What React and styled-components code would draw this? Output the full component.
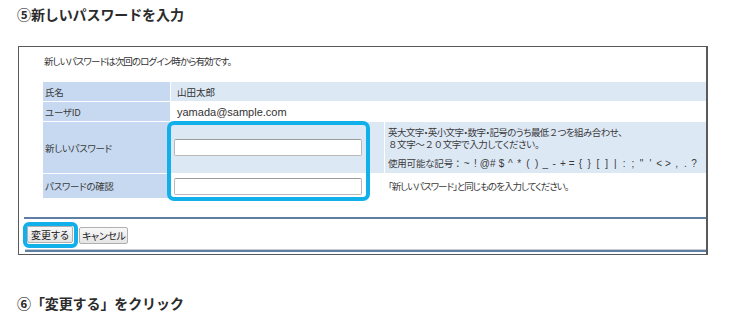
import React from "react";
import styled, { createGlobalStyle } from "styled-components";

const Global = createGlobalStyle`
  html, body { margin: 0; padding: 0; background: #fff; }
  body { font-family: "Liberation Sans", "Noto Sans CJK JP", sans-serif; color: #333; }
`;

const Page = styled.div`
  width: 732px;
  height: 335px;
  overflow: hidden;
  padding-left: 17px;
  box-sizing: border-box;
`;

const StepTitle = styled.h2`
  margin: 0;
  margin-top: ${(p) => p.$top}px;
  height: 28px;
  line-height: 28px;
  font-family: "Noto Sans CJK JP", sans-serif;
  font-size: 14px;
  font-weight: 700;
  color: #2b2b2b;
  letter-spacing: -0.1px;
`;

const Frame = styled.div`
  margin-top: 18px;
  margin-left: 1px;
  width: 690px;
  height: 209px;
  box-sizing: border-box;
  border: 1px solid #5a5a5a;
  border-right-width: 2px;
  display: flex;
  flex-direction: column;
  padding-top: 6px;
  overflow: hidden;
`;

const Intro = styled.p`
  margin: 0 0 0 25px;
  height: 16px;
  line-height: 16px;
  font-family: "Noto Sans CJK JP", sans-serif;
  font-feature-settings: "palt";
  font-size: 9.5px;
  letter-spacing: -0.9px;
  color: #333;
`;

const FormGrid = styled.div`
  position: relative;
  margin-top: 13px;
  margin-left: 24px;
  display: grid;
  grid-template-columns: 127px 213px minmax(0, 1fr);
  grid-template-rows: 19px 19px 51px 24px;
  gap: 1px;
`;

const Label = styled.div`
  background: #c6d9f0;
  display: flex;
  align-items: center;
  padding-left: 2px;
  font-family: "Noto Sans CJK JP", sans-serif;
  font-feature-settings: "palt";
  font-size: 9.5px;
  letter-spacing: -0.3px;
  color: #3a3a3a;
`;

const Value = styled.div`
  grid-column: ${(p) => (p.$wide ? "2 / 4" : "auto")};
  background: ${(p) => (p.$shaded ? "#dde8f5" : "#fff")};
  display: flex;
  align-items: center;
  padding-left: ${(p) => (p.$wide ? 6 : 3)}px;
  font-family: ${(p) => (p.$latin ? '"Liberation Sans", sans-serif' : '"Noto Sans CJK JP", sans-serif')};
  font-size: ${(p) => (p.$latin ? 11 : 9.5)}px;
  color: #333;
`;

const Note = styled.div`
  background: ${(p) => (p.$shaded ? "#dde8f5" : "#fff")};
  display: flex;
  flex-direction: column;
  justify-content: center;
  padding-left: 3px;
  font-family: "Noto Sans CJK JP", sans-serif;
  font-feature-settings: "palt";
  font-size: 9.5px;
  color: #3a3a3a;
  white-space: nowrap;
  overflow: hidden;
`;

const NoteLine = styled.div`
  line-height: 12px;
  margin-top: ${(p) => p.$gap || 0}px;
  letter-spacing: ${(p) => p.$track ?? 0}px;
`;

const Wide = styled.span`
  font-feature-settings: normal;
`;

const Symbol = styled.span`
  display: inline-block;
  width: 8.75px;
  text-align: center;
  font-family: "Liberation Sans", sans-serif;
  font-size: 10px;
  letter-spacing: 0;
`;

const TextInput = styled.input`
  display: block;
  width: 188px;
  height: 17px;
  margin: 0;
  box-sizing: border-box;
  border: 1px solid #b9b9b9;
  border-top-color: #9c9c9c;
  border-radius: 2px;
  background: #fff;
  padding: 0 3px;
`;

const InputHighlight = styled.div`
  position: absolute;
  left: 124px;
  top: 39px;
  width: 203px;
  height: 80px;
  box-sizing: border-box;
  border: 4px solid #12b0ea;
  border-radius: 7px;
  pointer-events: none;
`;

const Separator = styled.div`
  margin: 19px 0 0 5px;
  height: 2px;
  flex: none;
  background: #5e7ea3;
`;

const ButtonRow = styled.div`
  display: flex;
  align-items: center;
  gap: 1px;
  margin: 3px 0 0 4px;
`;

const ButtonHighlight = styled.div`
  border: 4px solid #12b0ea;
  border-radius: 6px;
  padding: 0 1px 1px 0;
  display: flex;
`;

const Button = styled.button`
  height: 17px;
  padding: 0 ${(p) => p.$pad ?? 2}px;
  margin: 0;
  box-sizing: border-box;
  border: 1px solid #b0b0b0;
  border-radius: 2px;
  background: linear-gradient(#f8f8f8, #e4e4e4);
  font-family: "Noto Sans CJK JP", sans-serif;
  font-feature-settings: "palt";
  font-size: 10px;
  line-height: 15px;
  letter-spacing: ${(p) => p.$track ?? 0}px;
  color: #222;
`;

const BottomRule = styled.div`
  margin: 1px 0 0 6px;
  height: 1px;
  flex: none;
  background: #c4ccd6;
  border-bottom: 2px solid #5e7ea3;
`;

const SYMBOLS = ["~", "!", "@", "#", "$", "^", "*", "(", ")", "_", "-", "+", "=", "{", "}", "[", "]", "|", ":", ";", "\"", "'", "<", ">", ",", ".", "?"];

export default function App() {
  return (
    <Page>
      <Global />
      <StepTitle $top={0}>⑤新しいパスワードを入力</StepTitle>
      <Frame>
        <Intro>新しいパスワードは次回のログイン時から有効です。</Intro>
        <FormGrid>
          <Label>氏名</Label>
          <Value $wide $shaded>山田太郎</Value>

          <Label>ユーザID</Label>
          <Value $wide $latin>yamada@sample.com</Value>

          <Label>新しいパスワード</Label>
          <Value $shaded>
            <TextInput type="password" />
          </Value>
          <Note $shaded>
            <NoteLine $track={-0.6}>
              英大文字・英小文字・数字・記号のうち最低<Wide>２</Wide>つを組み合わせ、
            </NoteLine>
            <NoteLine $track={-0.4}>
              <Wide>８</Wide>文字～<Wide>２０</Wide>文字で入力してください。
            </NoteLine>
            <NoteLine $gap={7} $track={-0.2}>
              使用可能な記号<Wide>：</Wide>
              {SYMBOLS.map((s, i) => (
                <Symbol key={i}>{s}</Symbol>
              ))}
            </NoteLine>
          </Note>

          <Label>パスワードの確認</Label>
          <Value>
            <TextInput type="password" />
          </Value>
          <Note>
            <NoteLine $track={-1}>「新しいパスワード」と同じものを入力してください。</NoteLine>
          </Note>

          <InputHighlight />
        </FormGrid>
        <Separator />
        <ButtonRow>
          <ButtonHighlight>
            <Button $pad={3}>変更する</Button>
          </ButtonHighlight>
          <Button $pad={2} $track={-0.4}>キャンセル</Button>
        </ButtonRow>
        <BottomRule />
      </Frame>
      <StepTitle $top={34}>⑥「変更する」をクリック</StepTitle>
    </Page>
  );
}
